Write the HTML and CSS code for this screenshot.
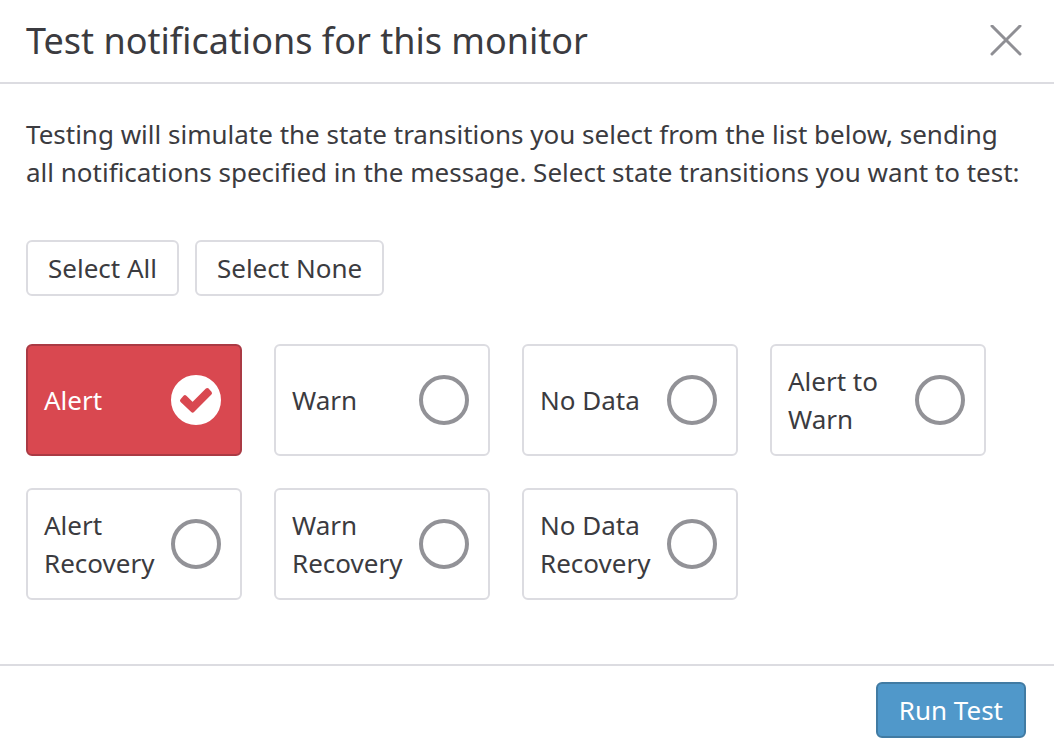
FILE: index.html
```html
<!DOCTYPE html>
<html lang="en">
<head>
<meta charset="utf-8">
<meta name="viewport" content="width=device-width, initial-scale=1">
<title>Test notifications for this monitor</title>
<link rel="stylesheet" href="styles.css">
</head>
<body>
<main class="dialog" role="dialog" aria-labelledby="dialog-title">
  <header class="dialog-header">
    <h1 class="dialog-title" id="dialog-title">Test notifications for this monitor</h1>
    <button class="close" type="button" aria-label="Close">
      <svg class="close-icon" viewBox="0 0 32 32" aria-hidden="true"><path d="M2 1L30 29M30 1L2 29"/></svg>
    </button>
  </header>
  <form class="dialog-form">
    <div class="dialog-body">
      <p class="intro">Testing will simulate the state transitions you select from the list below, sending all notifications specified in the message. Select state transitions you want to test:</p>
      <div class="actions">
        <button class="button" type="button">Select All</button>
        <button class="button" type="button">Select None</button>
      </div>
      <div class="options">
        <label class="option option-selected">
          <span class="option-label">Alert</span>
          <span class="check">
            <input class="check-input" type="checkbox" checked>
            <svg class="check-mark" viewBox="-25 -25 50 50" aria-hidden="true"><path d="M-14 0.5L-11 -2.8L-3.4 4.6L11.3 -10L14 -7L-3.4 10.6Z"/></svg>
          </span>
        </label>
        <label class="option">
          <span class="option-label">Warn</span>
          <span class="check"><input class="check-input" type="checkbox"></span>
        </label>
        <label class="option">
          <span class="option-label">No Data</span>
          <span class="check"><input class="check-input" type="checkbox"></span>
        </label>
        <label class="option">
          <span class="option-label">Alert to Warn</span>
          <span class="check"><input class="check-input" type="checkbox"></span>
        </label>
        <label class="option">
          <span class="option-label">Alert Recovery</span>
          <span class="check"><input class="check-input" type="checkbox"></span>
        </label>
        <label class="option">
          <span class="option-label">Warn Recovery</span>
          <span class="check"><input class="check-input" type="checkbox"></span>
        </label>
        <label class="option">
          <span class="option-label">No Data Recovery</span>
          <span class="check"><input class="check-input" type="checkbox"></span>
        </label>
      </div>
    </div>
    <footer class="dialog-footer">
      <button class="button button-primary" type="button">Run Test</button>
    </footer>
  </form>
</main>
</body>
</html>
```
FILE: styles.css
```css
* {
  box-sizing: border-box;
}

body {
  margin: 0;
  background: #fff;
  color: #3b3b40;
  font-family: "Noto Sans", sans-serif;
  font-size: 26px;
  line-height: 38px;
}

.dialog-header {
  display: flex;
  align-items: center;
  justify-content: space-between;
  padding: 16px 32px 16px 26px;
  border-bottom: 2px solid #dcdce1;
}

.dialog-title {
  margin: 0;
  font-size: 36px;
  font-weight: 400;
  line-height: 50px;
}

.close {
  display: flex;
  padding: 0;
  border: 0;
  background: none;
  cursor: pointer;
}

.close-icon {
  width: 32px;
  height: 32px;
  fill: none;
  stroke: #8f8f94;
  stroke-width: 3;
  stroke-linecap: round;
}

.dialog-body {
  padding: 31px 26px 64px;
}

.intro {
  margin: 0 0 49px;
}

.actions {
  display: flex;
  gap: 16px;
  margin-bottom: 48px;
}

.button {
  padding: 7px 20px;
  border: 2px solid #dcdce1;
  border-radius: 6px;
  background: #fff;
  color: inherit;
  font: inherit;
  cursor: pointer;
}

.button-primary {
  padding: 7px 21px;
  border-color: #417ba3;
  background: #5098ca;
  color: #fff;
}

.options {
  display: grid;
  grid-template-columns: repeat(auto-fill, 216px);
  gap: 32px;
}

.option {
  display: flex;
  align-items: center;
  justify-content: space-between;
  min-height: 112px;
  padding: 16px 19px 16px 16px;
  border: 2px solid #dcdce1;
  border-radius: 6px;
  cursor: pointer;
}

.option-label {
  flex: 1;
  min-width: 0;
}

.option-selected {
  border-color: #aa3a44;
  background: #d94850;
  color: #fff;
}

.check {
  display: grid;
  flex: none;
}

.check-input,
.check-mark {
  grid-area: 1 / 1;
  width: 50px;
  height: 50px;
  margin: 0;
}

.check-input {
  appearance: none;
  border: 4px solid #929297;
  border-radius: 50%;
  background: #fff;
}

.check-input:checked {
  border-color: #fff;
}

.check-mark {
  fill: #d94850;
  stroke: #d94850;
  stroke-width: 4;
  stroke-linejoin: round;
  pointer-events: none;
}

.dialog-footer {
  display: flex;
  justify-content: flex-end;
  padding: 16px 28px 14px;
  border-top: 2px solid #dcdce1;
}
```
